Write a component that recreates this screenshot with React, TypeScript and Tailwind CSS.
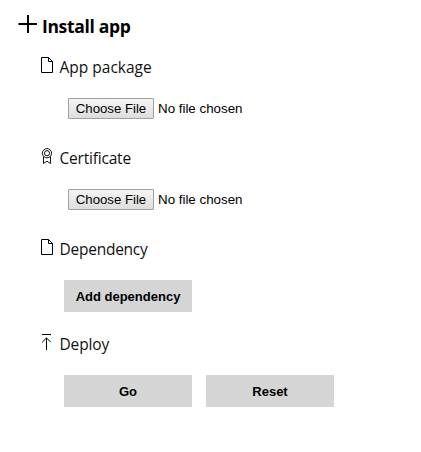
import type { ReactNode } from "react";

function DocIcon() {
  return (
    <svg width="13" height="17" viewBox="0 0 13 17" fill="none" stroke="#000" strokeWidth="1" className="block">
      <path d="M0.5 0.5H7.5L11.5 4.5V15.5H0.5Z M7.5 0.5V4.5H11.5" />
    </svg>
  );
}

function BadgeIcon() {
  return (
    <svg width="13" height="17" viewBox="0 0 13 17" fill="none" stroke="#111" strokeWidth="1" className="block">
      <circle cx="6" cy="5.2" r="4.6" />
      <circle cx="6" cy="5.2" r="2.6" />
      <path d="M2.5 8.5V15.5L6 13.2L9.5 15.5V8.5" />
    </svg>
  );
}

function UploadIcon() {
  return (
    <svg width="13" height="17" viewBox="0 0 13 17" fill="none" stroke="#000" strokeWidth="1" className="block">
      <path d="M1 0.5H10" />
      <path d="M5.5 16V4M1.2 8.2L5.5 3.9L9.8 8.2" />
    </svg>
  );
}

function Label({ icon, tracking, children }: { icon: ReactNode; tracking: string; children: ReactNode }) {
  return (
    <div className="flex h-8 items-start pl-[41px]">
      <div className="w-[18.5px] shrink-0 pt-[5px]">{icon}</div>
      <span className={`whitespace-nowrap font-['Open_Sans',sans-serif] text-[15.5px] leading-[31px] text-[#111] ${tracking}`}>{children}</span>
    </div>
  );
}

function FileInput() {
  return (
    <div className="mt-[14px] flex h-[21px] items-center gap-1 pl-[68px] font-['Liberation_Sans',Arial,sans-serif] text-[13.333px]">
      <button className="h-[21px] w-[86px] whitespace-nowrap rounded-[1px] border border-[#a0a0a0] bg-linear-to-b from-[#f5f5f5] to-[#dddddd] text-center text-[13.2px] leading-[19px] text-black">
        Choose File
      </button>
      <span className="whitespace-nowrap leading-[21px] text-black">No file chosen</span>
    </div>
  );
}

function Button({ children }: { children: ReactNode }) {
  return (
    <button className="h-8 w-32 whitespace-nowrap bg-[#d5d5d5] text-center font-['Liberation_Sans',Arial,sans-serif] text-[13px] font-bold leading-[33px] text-black">
      {children}
    </button>
  );
}

export default function App() {
  return (
    <div className="h-[452px] w-[421px] overflow-hidden bg-white pt-[10px]">
      <div className="flex h-[34px] items-start pl-[18px]">
        <svg width="20" height="20" viewBox="0 0 20 20" stroke="#000" strokeWidth="2" className="mt-[4px] block shrink-0">
          <path d="M0.5 10H19M10 1V19" />
        </svg>
        <h1 className="ml-1 whitespace-nowrap font-['Open_Sans',sans-serif] text-[17.5px] font-bold leading-[32px] tracking-[-0.34px] text-black">Install app</h1>
      </div>
      <section className="mt-2">
        <Label icon={<DocIcon />} tracking="tracking-[0px]">App package</Label>
        <FileInput />
      </section>
      <section className="mt-6">
        <Label icon={<BadgeIcon />} tracking="tracking-[-0.2px]">Certificate</Label>
        <FileInput />
      </section>
      <section className="mt-6">
        <Label icon={<DocIcon />} tracking="tracking-[-0.25px]">Dependency</Label>
        <div className="mt-[14px] flex pl-16">
          <Button>Add dependency</Button>
        </div>
      </section>
      <section className="mt-[17px]">
        <Label icon={<UploadIcon />} tracking="tracking-[-0.15px]">Deploy</Label>
        <div className="mt-[14px] flex gap-[14px] pl-16">
          <Button>Go</Button>
          <Button>Reset</Button>
        </div>
      </section>
    </div>
  );
}
